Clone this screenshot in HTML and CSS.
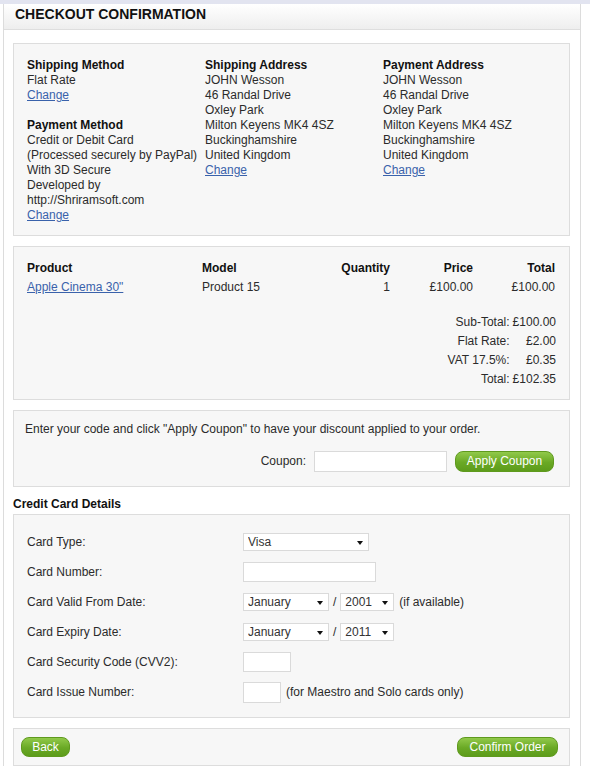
FILE: index.html
```html
<!DOCTYPE html>
<html>
<head>
<meta charset="utf-8">
<title>Checkout Confirmation</title>
<link rel="stylesheet" href="styles.css">
</head>
<body>
<div class="topband"></div>
<div class="page">
  <div class="heading">CHECKOUT CONFIRMATION</div>
  <div class="content">
    <div class="box addr">
      <div class="col">
        <div class="h">Shipping Method</div>
        <div>Flat Rate</div>
        <div><a href="#">Change</a></div>
        <div class="h spaced">Payment Method</div>
        <div>Credit or Debit Card</div>
        <div>(Processed securely by PayPal)</div>
        <div>With 3D Secure</div>
        <div>Developed by</div>
        <div>http://Shriramsoft.com</div>
        <div><a href="#">Change</a></div>
      </div>
      <div class="col">
        <div class="h">Shipping Address</div>
        <div>JOHN Wesson</div>
        <div>46 Randal Drive</div>
        <div>Oxley Park</div>
        <div>Milton Keyens MK4 4SZ</div>
        <div>Buckinghamshire</div>
        <div>United Kingdom</div>
        <div><a href="#">Change</a></div>
      </div>
      <div class="col">
        <div class="h">Payment Address</div>
        <div>JOHN Wesson</div>
        <div>46 Randal Drive</div>
        <div>Oxley Park</div>
        <div>Milton Keyens MK4 4SZ</div>
        <div>Buckinghamshire</div>
        <div>United Kingdom</div>
        <div><a href="#">Change</a></div>
      </div>
    </div>

    <div class="box products">
      <div class="ptable">
        <div class="h">Product</div>
        <div class="h">Model</div>
        <div class="h r">Quantity</div>
        <div class="h r">Price</div>
        <div class="h r">Total</div>
        <div><a href="#">Apple Cinema 30"</a></div>
        <div>Product 15</div>
        <div class="r">1</div>
        <div class="r">£100.00</div>
        <div class="r">£100.00</div>
      </div>
      <div class="totals">
        <div>Sub-Total:</div><div>£100.00</div>
        <div>Flat Rate:</div><div>£2.00</div>
        <div>VAT 17.5%:</div><div>£0.35</div>
        <div>Total:</div><div>£102.35</div>
      </div>
    </div>

    <div class="box coupon">
      <div class="coupon-text">Enter your code and click "Apply Coupon" to have your discount applied to your order.</div>
      <div class="coupon-row">
        <span class="coupon-label">Coupon:</span>
        <input class="field coupon-input" type="text">
        <button class="btn btn-apply" type="button">Apply Coupon</button>
      </div>
    </div>

    <div class="cc-title">Credit Card Details</div>
    <div class="box card">
      <div class="row">
        <span class="lbl">Card Type:</span>
        <span class="selwrap sel-type"><select class="sel"><option>Visa</option></select></span>
      </div>
      <div class="row">
        <span class="lbl">Card Number:</span>
        <input class="field in-number" type="text">
      </div>
      <div class="row">
        <span class="lbl">Card Valid From Date:</span>
        <span class="selwrap sel-month"><select class="sel"><option>January</option></select></span>
        <span class="slash">/</span>
        <span class="selwrap sel-year"><select class="sel"><option>2001</option></select></span>
        <span class="note">(if available)</span>
      </div>
      <div class="row">
        <span class="lbl">Card Expiry Date:</span>
        <span class="selwrap sel-month"><select class="sel"><option>January</option></select></span>
        <span class="slash">/</span>
        <span class="selwrap sel-year"><select class="sel"><option>2011</option></select></span>
      </div>
      <div class="row">
        <span class="lbl">Card Security Code (CVV2):</span>
        <input class="field in-cvv" type="text">
      </div>
      <div class="row">
        <span class="lbl">Card Issue Number:</span>
        <input class="field in-issue" type="text">
        <span class="note-issue">(for Maestro and Solo cards only)</span>
      </div>
    </div>

    <div class="box actions">
      <button class="btn btn-back" type="button">Back</button>
      <button class="btn btn-confirm" type="button">Confirm Order</button>
    </div>
  </div>
</div>
</body>
</html>
```

FILE: styles.css
```css
body {
  margin: 0;
  font-family: "Liberation Sans", Arial, sans-serif;
  font-size: 12px;
  line-height: 15px;
  color: #2b2b2b;
  background: #fff;
}

a {
  color: #3a62ab;
  text-decoration: underline;
}

.topband {
  height: 4px;
  background: #e2e4f0;
}

.page {
  margin-left: 3px;
  width: 576px;
  border-left: 1px solid #dcdcdc;
  border-right: 1px solid #dcdcdc;
}

.heading {
  height: 25px;
  line-height: 21px;
  padding-left: 11px;
  border-bottom: 1px solid #dedede;
  background: linear-gradient(#ffffff, #eeeeee);
  font-size: 14px;
  font-weight: bold;
  color: #111;
}

.content {
  padding: 13px 10px 0 9px;
}

.box {
  background: #f7f7f7;
  border: 1px solid #dddddd;
  margin-bottom: 10px;
}

.h {
  font-weight: bold;
  color: #111;
}

/* addresses */
.addr {
  padding: 14px 13px 12px;
  display: grid;
  grid-template-columns: 178px 178px 1fr;
}

.col {
  display: flex;
  flex-direction: column;
}

.spaced {
  margin-top: 15px;
}

/* products */
.products {
  padding: 12px 13px 10px 13px;
}

.ptable {
  display: grid;
  grid-template-columns: 175px 98px 90px 83px 82px;
  line-height: 19px;
}

.r {
  text-align: right;
}

.totals {
  margin-top: 16px;
  display: grid;
  grid-template-columns: auto auto;
  justify-content: end;
  column-gap: 3px;
  line-height: 19px;
  text-align: right;
}

/* coupon */
.coupon {
  padding: 11px 15px 14px 11px;
}

.coupon-row {
  margin-top: 13px;
  height: 22px;
  display: flex;
  justify-content: flex-end;
  align-items: center;
  gap: 8px;
}

.field {
  box-sizing: border-box;
  border: 1px solid #dadada;
  background: #fff;
  padding: 0 4px;
  margin: 0;
  font: 12px "Liberation Sans", Arial, sans-serif;
  outline: none;
}

.coupon-input {
  width: 133px;
  height: 21px;
}

.btn {
  box-sizing: border-box;
  height: 20px;
  padding: 0;
  border: 1px solid #5f9a1e;
  border-radius: 8px;
  background: linear-gradient(#91c94a, #6aa925 55%, #5d9c1b);
  color: #fff;
  font: 12px/18px "Liberation Sans", Arial, sans-serif;
  text-align: center;
  cursor: pointer;
}

.btn-apply {
  width: 99px;
  height: 21px;
}

/* credit card */
.cc-title {
  font-weight: bold;
  color: #111;
  margin-bottom: 2px;
}

.card {
  padding: 12px 13px 10px;
}

.row {
  height: 30px;
  display: flex;
  align-items: center;
}

.lbl {
  width: 216px;
  flex: none;
}

.selwrap {
  position: relative;
  display: inline-block;
  height: 18px;
}

.selwrap::after {
  content: "";
  position: absolute;
  right: 6px;
  top: 8px;
  border-left: 3.5px solid transparent;
  border-right: 3.5px solid transparent;
  border-top: 4px solid #111;
  pointer-events: none;
}

.sel {
  -webkit-appearance: none;
  appearance: none;
  box-sizing: border-box;
  width: 100%;
  height: 18px;
  margin: 0;
  padding: 0 4px;
  border: 1px solid #dadada;
  border-radius: 0;
  background: #fff;
  color: #333;
  font: 12px "Liberation Sans", Arial, sans-serif;
}

.sel-type {
  width: 126px;
}

.sel-month {
  width: 86px;
}

.sel-year {
  width: 54px;
}

.slash {
  margin: 0 4px 0 4px;
}

.note {
  margin-left: 5px;
}

.in-number {
  width: 133px;
  height: 20px;
}

.in-cvv {
  width: 48px;
  height: 20px;
}

.in-issue {
  width: 38px;
  height: 21px;
}

.note-issue {
  margin-left: 5px;
}

/* actions */
.actions {
  padding: 8px 11px 8px 7px;
  display: flex;
  justify-content: space-between;
}

.btn-back {
  width: 49px;
}

.btn-confirm {
  width: 101px;
}
```
